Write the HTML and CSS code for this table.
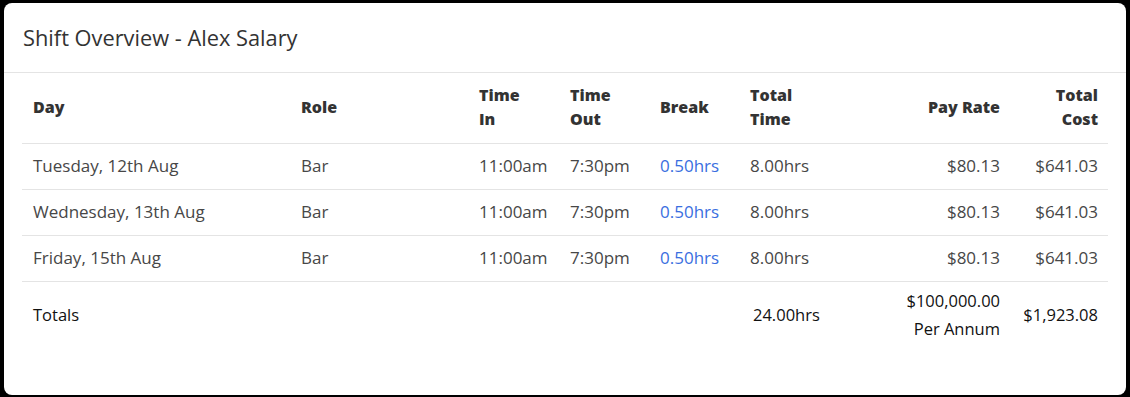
FILE: index.html
```html
<!DOCTYPE html>
<html>
<head>
<meta charset="utf-8">
<link rel="stylesheet" href="styles.css">
</head>
<body>
<div class="modal">
  <div class="modal-header">Shift Overview - Alex Salary</div>
  <div class="modal-body">
    <table class="shifts">
      <colgroup>
        <col class="c-day"><col class="c-role"><col class="c-in"><col class="c-out"><col class="c-break"><col class="c-total"><col class="c-rate"><col class="c-cost">
      </colgroup>
      <thead>
        <tr>
          <th>Day</th>
          <th>Role</th>
          <th>Time<br>In</th>
          <th>Time<br>Out</th>
          <th>Break</th>
          <th>Total<br>Time</th>
          <th class="right">Pay Rate</th>
          <th class="right">Total<br>Cost</th>
        </tr>
      </thead>
      <tbody>
        <tr>
          <td>Tuesday, 12th Aug</td><td>Bar</td><td>11:00am</td><td>7:30pm</td><td class="link">0.50hrs</td><td>8.00hrs</td><td class="right">$80.13</td><td class="right">$641.03</td>
        </tr>
        <tr>
          <td>Wednesday, 13th Aug</td><td>Bar</td><td>11:00am</td><td>7:30pm</td><td class="link">0.50hrs</td><td>8.00hrs</td><td class="right">$80.13</td><td class="right">$641.03</td>
        </tr>
        <tr>
          <td>Friday, 15th Aug</td><td>Bar</td><td>11:00am</td><td>7:30pm</td><td class="link">0.50hrs</td><td>8.00hrs</td><td class="right">$80.13</td><td class="right">$641.03</td>
        </tr>
      </tbody>
      <tfoot>
        <tr>
          <td>Totals</td><td></td><td></td><td></td><td></td><td class="tot-time">24.00hrs</td><td class="right rate-total">$100,000.00<br>Per Annum</td><td class="right">$1,923.08</td>
        </tr>
      </tfoot>
    </table>
  </div>
</div>
</body>
</html>
```
FILE: styles.css
```css
html, body {
  margin: 0;
  padding: 0;
  background: #000;
}
body {
  padding: 3px 4px 2px 4px;
  font-family: "Open Sans", "Liberation Sans", sans-serif;
}
.modal {
  background: #fff;
  border-radius: 8px;
  height: 392px;
  overflow: hidden;
}
.modal-header {
  height: 70px;
  box-sizing: border-box;
  padding: 20px 19px 0;
  font-size: 21.8px;
  color: #333;
  border-bottom: 1px solid #e4e4e4;
}
.modal-body {
  padding: 0 18px;
}
.shifts {
  width: 100%;
  border-collapse: collapse;
  table-layout: fixed;
}
.c-day { width: 268px; }
.c-role { width: 178px; }
.c-in { width: 91px; }
.c-out { width: 90px; }
.c-break { width: 90px; }
.c-total { width: 140px; }
.c-rate { width: 131px; }
.c-cost { width: 98px; }
.shifts th {
  text-align: left;
  font-weight: 800;
  font-size: 16px;
  line-height: 24px;
  color: #333;
  height: 68px;
  padding: 0 10px 2px 11px;
  border-bottom: 1px solid #e4e4e4;
  vertical-align: middle;
}
.shifts td {
  height: 42px;
  padding: 0 10px 3px 11px;
  font-size: 17px;
  color: #474747;
  border-bottom: 1px solid #e4e4e4;
  vertical-align: middle;
}
.shifts .right { text-align: right; }
.shifts td.link { color: #3a6ee0; }
.shifts tfoot td {
  border-bottom: none;
  height: 66px;
  color: #111;
  line-height: 28px;
  font-size: 16.5px;
  padding-bottom: 2px;
}
.shifts tfoot td.tot-time { padding-left: 14px; }
```
